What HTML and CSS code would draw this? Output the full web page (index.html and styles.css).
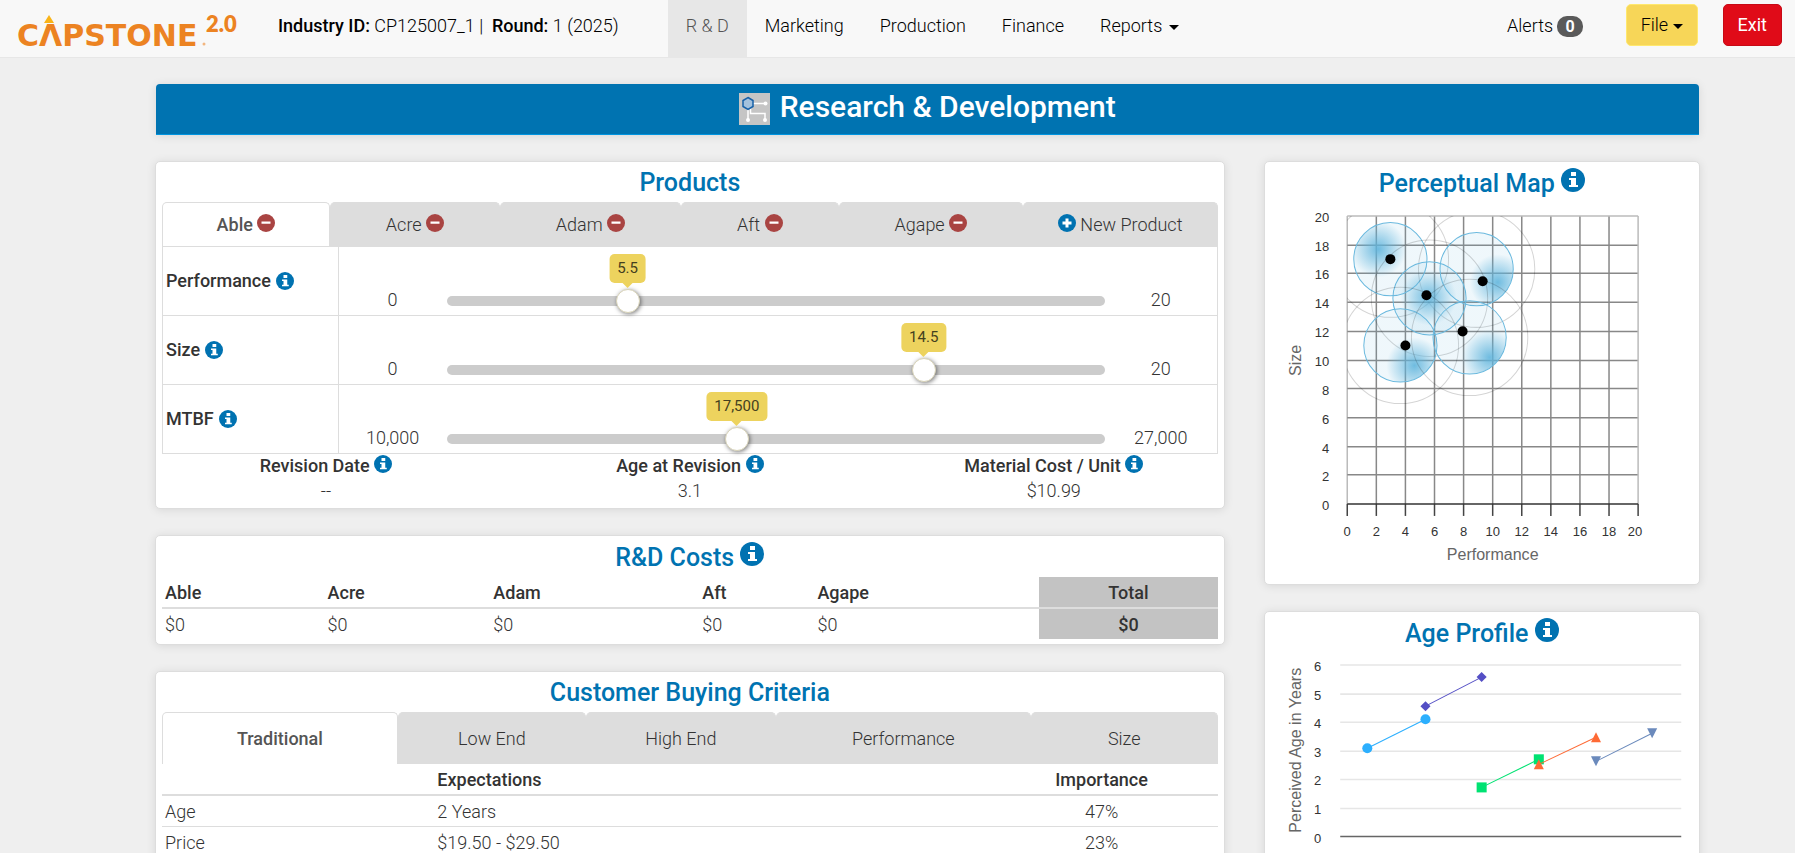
FILE: index.html
```html
<!DOCTYPE html>
<html lang="en">
<head>
    <meta charset="UTF-8">
    <meta name="viewport" content="width=device-width, initial-scale=1.0">
    <title>Capstone 2.0 - Research &amp; Development</title>
    <link rel="stylesheet" href="styles.css">
</head>
<body>
    <!-- shared icons -->
    <svg class="symbols" aria-hidden="true">
        <symbol id="info" viewBox="0 0 24 24">
            <circle cx="12" cy="12" r="12" fill="#0072b1"/>
            <path d="M10 4h5v4h-5zM8 10h7v7h2v2H8v-2h2v-5H8z" fill="#fff"/>
        </symbol>
        <symbol id="minus" viewBox="0 0 24 24">
            <circle cx="12" cy="12" r="12" fill="#a94442"/>
            <path d="M6 10h12v3H6z" fill="#fff"/>
        </symbol>
        <symbol id="plus" viewBox="0 0 24 24">
            <circle cx="12" cy="12" r="12" fill="#0072b1"/>
            <path d="M10 6h4v4h4v4h-4v4h-4v-4H6v-4h4z" fill="#fff"/>
        </symbol>
    </svg>

    <header class="navbar">
        <a class="brand" href="#" aria-label="Capstone 2.0">
            <svg width="228" height="52" viewBox="0 0 228 52">
                <path d="M33 11L38 19H28z" fill="#f9b418"/>
                <text class="brand-name" x="1" y="42">CΛPSTONE</text>
                <text class="brand-version" x="190" y="28">2.0</text>
                <circle cx="188" cy="40" r="1.500" fill="#f2b680"/>
            </svg>
        </a>
        <p class="industry"><b>Industry ID:</b> CP125007_1 |&nbsp; <b>Round:</b> 1 (2025)</p>
        <nav class="menu">
            <a class="active" href="#">R &amp; D</a>
            <a href="#">Marketing</a>
            <a href="#">Production</a>
            <a href="#">Finance</a>
            <a href="#">Reports <span class="caret"></span></a>
        </nav>
        <div class="actions">
            <a class="alerts" href="#">Alerts <span class="badge">0</span></a>
            <button class="btn btn-file" type="button">File <span class="caret"></span></button>
            <button class="btn btn-exit" type="button">Exit</button>
        </div>
    </header>

    <main>
        <h1 class="banner">
            <svg class="banner-icon" width="31" height="32" viewBox="0 0 31 32" aria-hidden="true">
                <path d="M0 0h31v32H0z" fill="#c5c5c5"/>
                <path d="M14 10.500H26M9 16v11M11.500 15v5.500H26V27" fill="none" stroke="#fff" stroke-width="1.500"/>
                <circle cx="26.500" cy="10.500" r="2" fill="#fff"/>
                <circle cx="9" cy="27" r="2" fill="#fff"/>
                <circle cx="26" cy="27" r="2" fill="#fff"/>
                <path d="M9 4.500l5 3v6l-5 3-5-3v-6z" fill="#a3c1dd" stroke="#1660a8" stroke-width="1.500"/>
            </svg>
            Research &amp; Development
        </h1>

        <div class="columns">
            <div class="column">
                <section class="card">
                    <h2>Products</h2>
                    <div class="tabs product-tabs">
                        <button class="tab active" type="button">Able <svg class="icon"><use href="#minus"/></svg></button>
                        <button class="tab" type="button">Acre <svg class="icon"><use href="#minus"/></svg></button>
                        <button class="tab" type="button">Adam <svg class="icon"><use href="#minus"/></svg></button>
                        <button class="tab" type="button">Aft <svg class="icon"><use href="#minus"/></svg></button>
                        <button class="tab" type="button">Agape <svg class="icon"><use href="#minus"/></svg></button>
                        <button class="tab" type="button"><svg class="icon"><use href="#plus"/></svg> New Product</button>
                    </div>
                    <div class="specs">
                        <div class="spec">
                            <label for="performance">Performance <svg class="icon"><use href="#info"/></svg></label>
                            <div class="range">
                                <span>0</span>
                                <div class="slider">
                                    <input type="range" id="performance" min="0" max="20" step="0.1" value="5.5">
                                    <output for="performance" style="left: 27.5%">5.5</output>
                                </div>
                                <span>20</span>
                            </div>
                        </div>
                        <div class="spec">
                            <label for="size">Size <svg class="icon"><use href="#info"/></svg></label>
                            <div class="range">
                                <span>0</span>
                                <div class="slider">
                                    <input type="range" id="size" min="0" max="20" step="0.1" value="14.5">
                                    <output for="size" style="left: 72.5%">14.5</output>
                                </div>
                                <span>20</span>
                            </div>
                        </div>
                        <div class="spec">
                            <label for="mtbf">MTBF <svg class="icon"><use href="#info"/></svg></label>
                            <div class="range">
                                <span>10,000</span>
                                <div class="slider">
                                    <input type="range" id="mtbf" min="10000" max="27000" step="100" value="17500">
                                    <output for="mtbf" style="left: 44.1%">17,500</output>
                                </div>
                                <span>27,000</span>
                            </div>
                        </div>
                    </div>
                    <dl class="summary">
                        <div>
                            <dt>Revision Date <svg class="icon"><use href="#info"/></svg></dt>
                            <dd>--</dd>
                        </div>
                        <div>
                            <dt>Age at Revision <svg class="icon"><use href="#info"/></svg></dt>
                            <dd>3.1</dd>
                        </div>
                        <div>
                            <dt>Material Cost / Unit <svg class="icon"><use href="#info"/></svg></dt>
                            <dd>$10.99</dd>
                        </div>
                    </dl>
                </section>

                <section class="card">
                    <h2 class="with-info">R&amp;D Costs <svg class="icon-lg"><use href="#info"/></svg></h2>
                    <table class="costs">
                        <thead>
                            <tr><th>Able</th><th>Acre</th><th>Adam</th><th>Aft</th><th>Agape</th><th class="total">Total</th></tr>
                        </thead>
                        <tbody>
                            <tr><td>$0</td><td>$0</td><td>$0</td><td>$0</td><td>$0</td><td class="total">$0</td></tr>
                        </tbody>
                    </table>
                </section>

                <section class="card">
                    <h2>Customer Buying Criteria</h2>
                    <div class="tabs segment-tabs">
                        <button class="tab active" type="button">Traditional</button>
                        <button class="tab" type="button">Low End</button>
                        <button class="tab" type="button">High End</button>
                        <button class="tab" type="button">Performance</button>
                        <button class="tab" type="button">Size</button>
                    </div>
                    <table class="criteria">
                        <thead>
                            <tr><th></th><th>Expectations</th><th>Importance</th></tr>
                        </thead>
                        <tbody>
                            <tr><td>Age</td><td>2 Years</td><td>47%</td></tr>
                            <tr><td>Price</td><td>$19.50 - $29.50</td><td>23%</td></tr>
                        </tbody>
                    </table>
                </section>
            </div>

            <div class="column">
                <section class="card">
                    <h2 class="with-info">Perceptual Map <svg class="icon-lg"><use href="#info"/></svg></h2>
                    <svg class="chart" id="map" viewBox="0 0 433 376"></svg>
                </section>
                <section class="card">
                    <h2 class="with-info">Age Profile <svg class="icon-lg"><use href="#info"/></svg></h2>
                    <svg class="chart" id="age" viewBox="0 0 433 240"></svg>
                </section>
            </div>
        </div>
    </main>
    <script src="charts.js"></script>
</body>
</html>
```

FILE: styles.css
```css
* {
    box-sizing: border-box;
}
body {
    margin: 0;
    background-color: #efefef;
    color: #333;
    font-family: Roboto, sans-serif;
    font-size: 18px;
    font-weight: 300;
    line-height: 24px;
}
button {
    font: inherit;
    color: inherit;
    cursor: pointer;
}
b,
th {
    font-weight: 500;
}
.symbols {
    display: none;
}
.icon {
    width: 18px;
    height: 18px;
    vertical-align: -1px;
}
.icon-lg {
    width: 24px;
    height: 24px;
    vertical-align: 0;
}

/* top bar */
.navbar {
    display: flex;
    align-items: stretch;
    height: 58px;
    padding: 0 13px 0 16px;
    background-color: #f8f8f8;
    border-bottom: 1px solid #e7e7e7;
    color: #000;
}
.navbar a {
    color: #000;
    text-decoration: none;
}
.brand {
    padding-top: 4px;
}
.brand svg {
    display: block;
}
.brand-name {
    font: bold 30px "DejaVu Sans", sans-serif;
    fill: #ec8322;
}
.brand-version {
    font: 800 22px Lato, sans-serif;
    fill: #ec8322;
}
.industry {
    margin: 0 49px 0 34px;
    padding-top: 14px;
    white-space: nowrap;
}
.menu {
    display: flex;
}
.menu a {
    padding: 14px 18px 0;
}
.menu .active {
    background-color: #e7e7e7;
    color: #555;
}
.caret {
    display: inline-block;
    margin-left: 2px;
    border-top: 5px solid;
    border-left: 5px solid transparent;
    border-right: 5px solid transparent;
    vertical-align: middle;
}
.actions {
    display: flex;
    align-items: flex-start;
    gap: 25px;
    margin-left: auto;
    padding-top: 4px;
}
.alerts {
    margin-right: 18px;
    padding-top: 10px;
}
.badge {
    display: inline-block;
    padding: 0 8px;
    border-radius: 10px;
    background-color: #5a5a5a;
    color: #fff;
    font-size: 16px;
    font-weight: bold;
    line-height: 21px;
}
.btn {
    height: 42px;
    padding: 0 14px;
    border: 1px solid;
    border-radius: 5px;
}
.btn-file {
    background-color: #f7d658;
    border-color: #ffe86e;
}
.btn-file .caret {
    margin-left: 0;
}
.btn-exit {
    background-color: #e00b18;
    border-color: #c70a15;
    color: #fff;
    font-weight: 400;
}

/* page */
main {
    padding: 26px 96px 26px 156px;
}
.banner {
    margin: 0 0 26px;
    padding-bottom: 5px;
    background-color: #0073b1;
    border-bottom: 1px solid #0095e0;
    border-radius: 4px 4px 0 0;
    box-shadow: 0 1px 10px rgba(0, 0, 0, 0.1);
    color: #fff;
    font-size: 30px;
    font-weight: 500;
    line-height: 45px;
    text-align: center;
}
.banner-icon {
    margin-right: 2px;
    vertical-align: -8px;
}
.columns {
    display: grid;
    grid-template-columns: 1069fr 436fr;
    gap: 39px;
    align-items: start;
    margin: 0 -1px;
}
.column {
    display: grid;
    gap: 26px;
    min-width: 0;
}
.card {
    padding: 0 6px 5px;
    background-color: #fff;
    border: 1px solid #ddd;
    border-radius: 5px;
    box-shadow: 0 1px 10px rgba(0, 0, 0, 0.1);
}
h2 {
    height: 40px;
    margin: 0;
    padding-top: 1px;
    color: #0073b1;
    font-size: 25px;
    font-weight: 500;
    line-height: 39px;
    text-align: center;
}
.with-info {
    padding-top: 2px;
}

/* tabs */
.tabs {
    display: grid;
}
.product-tabs {
    grid-template-columns: 168fr 170fr 181fr 158fr 184fr 195fr;
    height: 44px;
}
.segment-tabs {
    grid-template-columns: 236fr 188fr 190fr 255fr 187fr;
    height: 52px;
}
.tab {
    padding: 0;
    background-color: #ddd;
    border: 1px solid #ddd;
    border-bottom: 0;
    border-radius: 5px 5px 0 0;
}
.tab.active {
    background-color: #fff;
    color: #555;
    font-weight: 500;
}

/* product sliders */
.specs {
    border: 1px solid #ddd;
    border-bottom: 0;
}
.spec {
    display: grid;
    grid-template-columns: 1fr 5fr;
    border-bottom: 1px solid #ddd;
}
.spec label {
    display: flex;
    align-items: center;
    gap: 5px;
    padding-left: 3px;
    border-right: 1px solid #ddd;
    font-weight: 500;
}
.range {
    display: grid;
    grid-template-columns: 108px 1fr 112px;
    align-items: end;
    height: 68px;
    padding-bottom: 4px;
    line-height: 20px;
    text-align: center;
}
.range > span {
    padding-bottom: 1px;
}
.slider {
    position: relative;
}
.slider::before {
    content: "";
    position: absolute;
    inset: 5px 0;
    background-color: #ccc;
    border-radius: 5px;
}
.slider input {
    display: block;
    position: relative;
    width: calc(100% + 24px);
    height: 20px;
    margin: 0 -12px;
    appearance: none;
    background: none;
}
.slider input::-webkit-slider-thumb {
    width: 24px;
    height: 24px;
    appearance: none;
    background-color: #fff;
    border: 1px solid #d8d3b8;
    border-radius: 50%;
    box-shadow: 1px 1px 4px rgba(0, 0, 0, 0.5);
}
.slider output {
    position: absolute;
    bottom: 28px;
    padding: 4px 8px 5px;
    background-color: #edd35e;
    border-radius: 5px;
    color: #44401f;
    font-size: 15px;
    font-weight: 400;
    transform: translateX(-50%);
}
.slider output::after {
    content: "";
    position: absolute;
    top: 100%;
    left: 50%;
    margin-left: -5px;
    border: 5px solid transparent;
    border-top-color: #edd35e;
    border-bottom: 0;
}
.summary {
    display: grid;
    grid-template-columns: repeat(3, 1fr);
    margin: 0 -18px;
    text-align: center;
}
.summary dt {
    margin-bottom: 1px;
    font-weight: 500;
}
.summary dd {
    margin: 0;
}

/* tables */
table {
    width: 100%;
    border-collapse: collapse;
    table-layout: fixed;
}
th,
td {
    padding: 4px 3px 2px;
    text-align: left;
}
thead th {
    border-bottom: 2px solid #ddd;
}
.costs {
    margin-top: 1px;
}
.costs th:nth-child(1) {
    width: 15.4%;
}
.costs th:nth-child(2) {
    width: 15.7%;
}
.costs th:nth-child(3) {
    width: 19.8%;
}
.costs th:nth-child(4) {
    width: 10.9%;
}
.costs th:nth-child(5) {
    width: 21.3%;
}
.costs .total {
    background-color: #c3c3c3;
    font-weight: 500;
    text-align: center;
}
.criteria th:nth-child(1) {
    width: 25.8%;
}
.criteria th:nth-child(3) {
    width: 22%;
}
.criteria th:nth-child(3),
.criteria td:nth-child(3) {
    text-align: center;
}
.criteria td {
    border-bottom: 1px solid #ddd;
}

/* charts */
.chart {
    display: block;
    width: calc(100% + 12px);
    margin: 0 -6px;
    font-family: "Liberation Sans", Arial, sans-serif;
    font-size: 13px;
    font-weight: 400;
    fill: #333;
}
.chart .axis-title {
    fill: #666;
    font-size: 16px;
}
```

FILE: charts.js
```javascript
function perceptualMap() {
    const left = 82, bottom = 301, stepX = 29, stepY = 28.7;
    const right = left + stepX * 10, top = bottom - stepY * 10;
    const segments = [
        { x: 125, y: 57, idealX: 113, idealY: 47, dotX: 125, dotY: 57 },
        { x: 211, y: 67, idealX: 232, idealY: 80, dotX: 217, dotY: 79 },
        { x: 164, y: 96, idealX: 163, idealY: 95, dotX: 161, dotY: 93 },
        { x: 135, y: 143, idealX: 149, idealY: 163, dotX: 140, dotY: 143 },
        { x: 204, y: 135, idealX: 224, idealY: 155, dotX: 197, dotY: 129 }
    ];
    let defs = `<clipPath id="plot"><rect x="${left}" y="${top}" width="290" height="287"/></clipPath>`;
    let grid = '', labels = '', circles = '', dots = '';

    for (let i = 0; i <= 10; i++) {
        const x = Math.round(left + i * stepX), y = Math.round(bottom - i * stepY);
        const edge = i === 0 || i === 10;
        grid += `<path d="M${x} ${top}V${bottom}" stroke="${edge ? '#bbb' : '#888'}"/>`;
        if (i > 0) {
            grid += `<path d="M${left} ${y}H${right}" stroke="${edge ? '#bbb' : '#888'}"/>`;
        }
        grid += `<path d="M${x} ${bottom}v12" stroke="#444"/>`;
        labels += `<text x="64" y="${y + 6}" text-anchor="end">${i * 2}</text>`;
        labels += `<text x="${i === 10 ? x - 3 : x}" y="333" text-anchor="middle">${i * 2}</text>`;
    }
    grid += `<path d="M${left} ${bottom}H${right}" stroke="#333"/>`;

    segments.forEach((s, i) => {
        defs += `<radialGradient id="ideal${i}" gradientUnits="userSpaceOnUse" cx="${s.idealX}" cy="${s.idealY}" r="28">
            <stop offset="0" stop-color="#5fb4dc" stop-opacity="0.9"/>
            <stop offset="1" stop-color="#5fb4dc" stop-opacity="0.1"/>
        </radialGradient>`;
        circles += `<circle cx="${s.x}" cy="${s.y}" r="58" fill="none" stroke="#000" stroke-opacity="0.17"/>
            <circle cx="${s.x}" cy="${s.y}" r="36.5" fill="url(#ideal${i})" stroke="#6bb9de"/>`;
        dots += `<circle cx="${s.dotX}" cy="${s.dotY}" r="5" fill="#000"/>`;
    });

    document.getElementById('map').innerHTML = `<defs>${defs}</defs>
        <g stroke-width="1.5">${grid}</g>
        <g clip-path="url(#plot)">${circles}</g>
        ${dots}${labels}
        <text class="axis-title" x="227" y="357" text-anchor="middle">Performance</text>
        <text class="axis-title" transform="translate(36 158) rotate(-90)" text-anchor="middle">Size</text>`;
}

function ageProfile() {
    const series = [
        { color: '#2caffe', shape: 'M-5 0a5 5 0 1 0 10 0a5 5 0 1 0 -10 0', points: [[102, 96], [160, 67]] },
        { color: '#544fc5', shape: 'M0 -5L5 0L0 5L-5 0z', points: [[160, 54], [216, 25]] },
        { color: '#00e272', shape: 'M-5 -5H5V5H-5z', points: [[216, 135], [273, 107]] },
        { color: '#fe6a35', shape: 'M0 -5L5 5H-5z', points: [[273, 112], [330, 85]] },
        { color: '#6b8abc', shape: 'M0 5L5 -5H-5z', points: [[330, 109], [386, 81]] }
    ];
    let out = '';
    for (let i = 0; i <= 6; i++) {
        const y = Math.round(184 - i * 28.5);
        out += `<path d="M75 ${y}H415" stroke="${i ? '#e6e6e6' : '#666'}" stroke-width="1.5"/>`;
        out += `<text x="56" y="${y + 6}" text-anchor="end">${i}</text>`;
    }
    series.forEach(s => {
        const [a, b] = s.points;
        out += `<path d="M${a}L${b}" stroke="${s.color}"/>`;
        s.points.forEach(p => {
            out += `<path d="${s.shape}" transform="translate(${p})" fill="${s.color}"/>`;
        });
    });
    out += '<text class="axis-title" transform="translate(36 98) rotate(-90)" text-anchor="middle">Perceived Age in Years</text>';
    document.getElementById('age').innerHTML = out;
}

perceptualMap();
ageProfile();
```
